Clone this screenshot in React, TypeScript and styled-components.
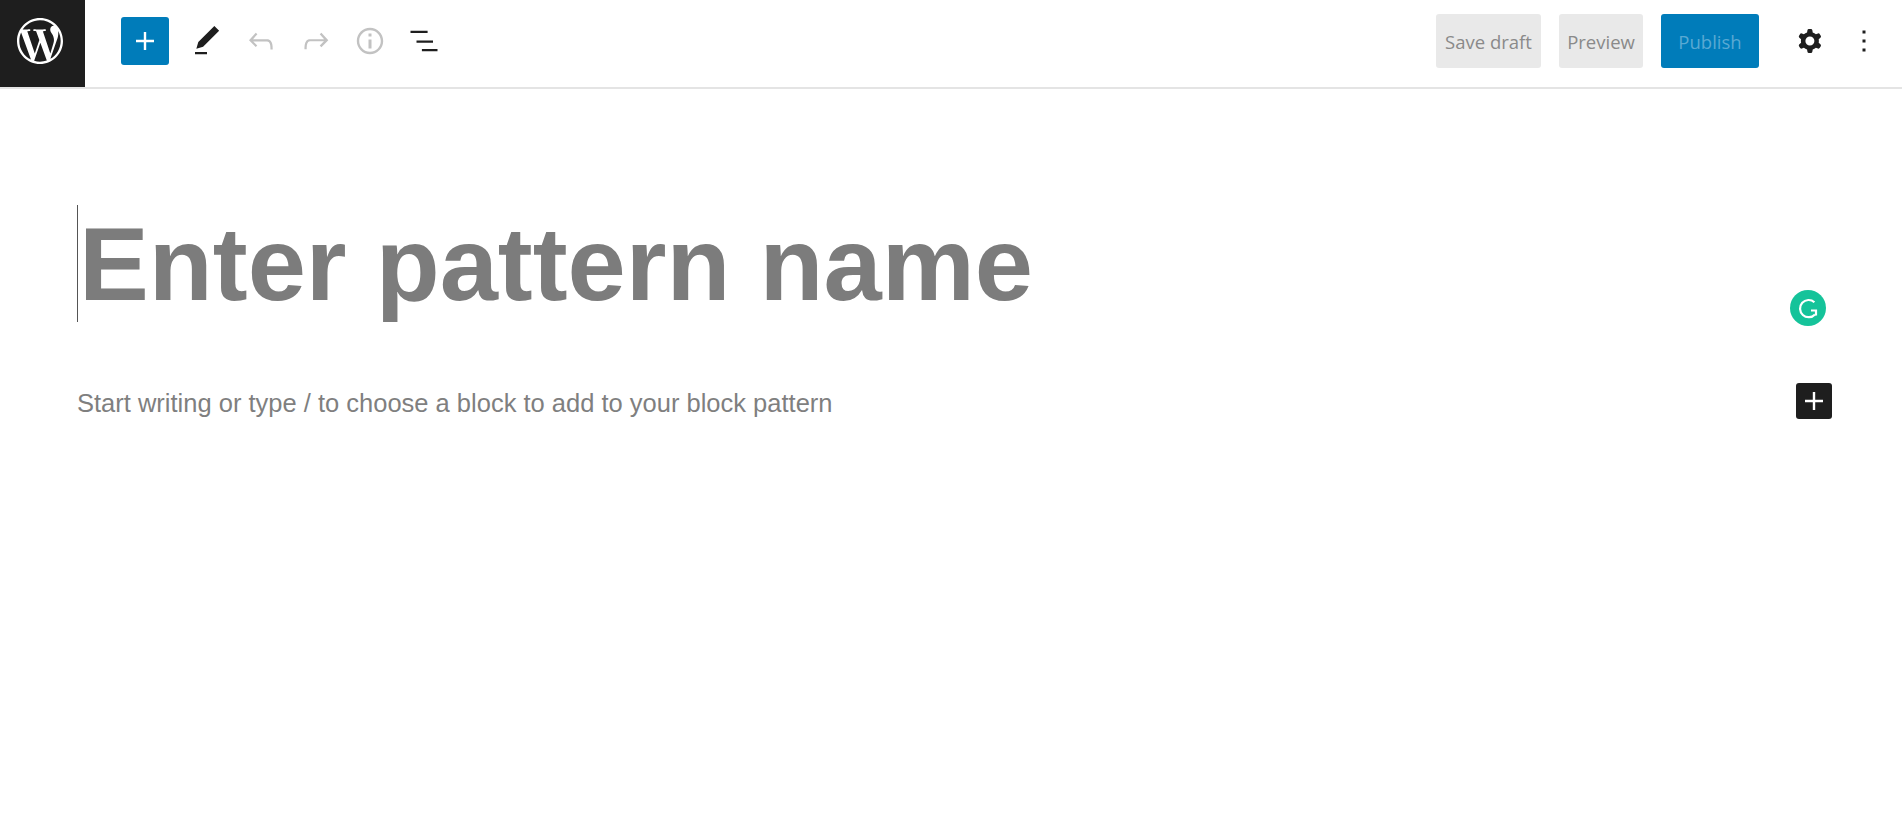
import React from "react";
import styled, { createGlobalStyle } from "styled-components";
import { SiWordpress } from "react-icons/si";

const Global = createGlobalStyle`
  html, body { margin: 0; padding: 0; background: #fff; }
  body { font-family: "Liberation Sans", Arial, sans-serif; }
`;

const Page = styled.div`
  width: 1902px;
  height: 814px;
  overflow: hidden;
  position: relative;
  background: #fff;
`;

const Header = styled.header`
  height: 87px;
  display: flex;
  align-items: flex-start;
  border-bottom: 2px solid #e4e4e4;
`;

const LogoBox = styled.div`
  width: 85px;
  height: 87px;
  box-sizing: border-box;
  padding: 0 5px 5px 0;
  background: #1e1e1e;
  color: #fff;
  display: flex;
  align-items: center;
  justify-content: center;
  flex: none;
`;

const LeftTools = styled.div`
  display: flex;
  align-items: center;
  margin: 17px 0 0 36px;
  flex: 1;
`;

const Inserter = styled.div`
  width: 48px;
  height: 48px;
  background: #007cba;
  border-radius: 3px;
  display: flex;
  align-items: center;
  justify-content: center;
  margin-right: 11px;
`;

const ToolSlot = styled.div`
  width: 54.3px;
  height: 48px;
  display: flex;
  align-items: center;
  justify-content: center;
  color: ${(p) => (p.$muted ? "#c2c2c2" : "#1e1e1e")};
`;

const RightTools = styled.div`
  display: flex;
  align-items: center;
  margin-top: 14px;
  padding-right: 11px;
`;

const ActionButton = styled.div`
  height: 54px;
  width: ${(p) => p.$width}px;
  margin-right: ${(p) => p.$gap}px;
  display: flex;
  align-items: center;
  justify-content: center;
  border-radius: 3px;
  font-family: "Open Sans", "Noto Sans", sans-serif;
  font-size: 18.5px;
  white-space: nowrap;
  background: ${(p) => (p.$primary ? "#007cba" : "#e9e9e9")};
  color: ${(p) => (p.$primary ? "#59a9d3" : "#8a8a8a")};
`;

const IconSlot = styled.div`
  width: 54px;
  height: 48px;
  display: flex;
  align-items: center;
  justify-content: center;
  color: #1e1e1e;
`;

const Editor = styled.main`
  padding: 116px 70px 0 77px;
`;

const TitleRow = styled.div`
  border-left: 1px solid #555;
  height: 117px;
`;

const Title = styled.h1`
  margin: 0;
  padding-left: 1px;
  font-size: 104.7px;
  line-height: 117px;
  font-weight: 700;
  color: #7c7c7c;
  white-space: nowrap;
`;

const ParagraphRow = styled.div`
  margin-top: 61px;
  height: 36px;
  display: flex;
  align-items: center;
  justify-content: space-between;
`;

const Placeholder = styled.p`
  margin: 0;
  padding-top: 4px;
  font-size: 25.5px;
  color: #7f7f7f;
  white-space: nowrap;
`;

const BlockInserter = styled.div`
  width: 36px;
  height: 36px;
  background: #1e1e1e;
  border-radius: 3px;
  display: flex;
  align-items: center;
  justify-content: center;
`;

const Grammarly = styled.div`
  position: absolute;
  left: 1790px;
  top: 290px;
  width: 36px;
  height: 36px;
  border-radius: 50%;
  background: #15c39a;
  display: flex;
  align-items: center;
  justify-content: center;
`;

const Icon = ({ d, size = 36, color = "currentColor" }: { d: string; size?: number; color?: string }) => (
  <svg width={size} height={size} viewBox="0 0 24 24" fill={color} fillRule="evenodd">
    <path d={d} />
  </svg>
);

const PLUS = "M18 11.2h-5.2V6h-1.6v5.2H6v1.6h5.2V18h1.6v-5.2H18z";
const PEN = "M20.1 5.1L16.9 2 6.2 12.7l-1.3 4.4 4.5-1.3L20.1 5.1zM4 20.8h8v-1.5H4v1.5z";
const UNDO = "M18.3 11.7c-.6-.6-1.4-.9-2.3-.9H6.7l2.9-3.3-1.1-1-4.5 5L8.5 16l1-1-2.7-2.7H16c.5 0 .9.2 1.3.5 1 1 1 3.4 1 4.5v.3h1.5v-.2c0-1.5 0-4.3-1.5-5.7z";
const REDO = "M15.6 6.5l-1.1 1 2.9 3.3H8c-.9 0-1.7.3-2.3.9-1.4 1.5-1.4 4.2-1.4 5.6v.2h1.5v-.3c0-1.1 0-3.5 1-4.5.3-.3.7-.5 1.3-.5h9.2L14.5 15l1.1 1.1 4.6-4.6-4.6-5z";
const INFO = "M12 3.2c-4.8 0-8.8 3.9-8.8 8.8 0 4.8 3.9 8.8 8.8 8.8 4.8 0 8.8-3.9 8.8-8.8 0-4.8-4-8.8-8.8-8.8zm0 16c-4 0-7.2-3.3-7.2-7.2C4.8 8 8 4.8 12 4.8s7.2 3.3 7.2 7.2c0 4-3.2 7.2-7.2 7.2zM11 17h2v-6h-2v6zm0-8h2V7h-2v2z";
const LIST = "M3 5.2h11.4v1.5H3zM7 11.7h11v1.5H7zM10.6 17.3H21v1.5H10.6z";
const COG = "M10.289 4.836A1 1 0 0111.275 4h1.306a1 1 0 01.987.836l.244 1.466c.787.26 1.503.679 2.108 1.218l1.393-.522a1 1 0 011.216.437l.653 1.13a1 1 0 01-.23 1.273l-1.148.944a6.025 6.025 0 010 2.435l1.149.946a1 1 0 01.23 1.272l-.653 1.13a1 1 0 01-1.216.437l-1.394-.522c-.605.54-1.32.958-2.108 1.218l-.244 1.466a1 1 0 01-.987.836h-1.306a1 1 0 01-.986-.836l-.244-1.466a5.995 5.995 0 01-2.108-1.218l-1.394.522a1 1 0 01-1.217-.436l-.653-1.131a1 1 0 01.23-1.272l1.149-.946a6.026 6.026 0 010-2.435l-1.148-.944a1 1 0 01-.23-1.272l.653-1.131a1 1 0 011.217-.437l1.393.522a5.994 5.994 0 012.108-1.218l.244-1.466zM14.929 12a3 3 0 11-6 0 3 3 0 016 0z";
const MORE = "M13 19h-2v-2h2v2zm0-6h-2v-2h2v2zm0-6h-2V5h2v2z";

export default function App() {
  return (
    <Page>
      <Global />
      <Header>
        <LogoBox>
          <SiWordpress size={46} />
        </LogoBox>
        <LeftTools>
          <Inserter>
            <Icon d={PLUS} color="#fff" />
          </Inserter>
          <ToolSlot><Icon d={PEN} /></ToolSlot>
          <ToolSlot $muted><Icon d={UNDO} /></ToolSlot>
          <ToolSlot $muted><Icon d={REDO} /></ToolSlot>
          <ToolSlot $muted><Icon d={INFO} /></ToolSlot>
          <ToolSlot><Icon d={LIST} /></ToolSlot>
        </LeftTools>
        <RightTools>
          <ActionButton $width={105} $gap={18}>Save draft</ActionButton>
          <ActionButton $width={84} $gap={18}>Preview</ActionButton>
          <ActionButton $width={98} $gap={24} $primary>Publish</ActionButton>
          <IconSlot><Icon d={COG} /></IconSlot>
          <IconSlot><Icon d={MORE} /></IconSlot>
        </RightTools>
      </Header>
      <Editor>
        <TitleRow>
          <Title>Enter pattern name</Title>
        </TitleRow>
        <ParagraphRow>
          <Placeholder>Start writing or type / to choose a block to add to your block pattern</Placeholder>
          <BlockInserter>
            <Icon d={PLUS} color="#fff" />
          </BlockInserter>
        </ParagraphRow>
      </Editor>
      <Grammarly>
        <svg width="24" height="24" viewBox="0 0 24 24" fill="none" stroke="#fff" strokeWidth="2.2">
          <path d="M18.4 6.2A8.6 8.6 0 1 0 19 18.4" />
          <path d="M15 14.5h5v5" />
        </svg>
      </Grammarly>
    </Page>
  );
}
